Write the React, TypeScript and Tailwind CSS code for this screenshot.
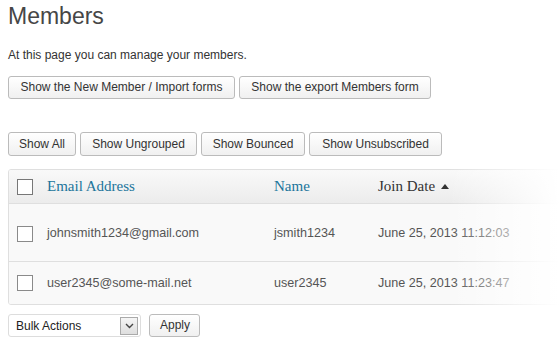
import React from "react";

const btn =
  "h-[23px] px-[10px] rounded-[3px] border border-[#bbb] bg-gradient-to-b from-white to-[#f0f0f0] text-[12px] leading-[21px] text-[#333] whitespace-nowrap";

function Check({ dark }: { dark?: boolean }) {
  return (
    <span
      className={`block w-[16px] h-[16px] bg-white border ${dark ? "border-[#777]" : "border-[#8a8a8a]"}`}
    />
  );
}

export default function App() {
  const rows = [
    { email: "johnsmith1234@gmail.com", name: "jsmith1234", date: "June 25, 2013 11:12:03", h: "h-[58px]" },
    { email: "user2345@some-mail.net", name: "user2345", date: "June 25, 2013 11:23:47", h: "h-[42px]" },
  ];
  return (
    <div className="w-[559px] h-[347px] overflow-hidden bg-white relative font-['Liberation_Sans',Arial,sans-serif] text-[#333]">
      <div className="pl-[8px]">
        <h2 className="text-[23px] leading-[29px] text-[#464646] pt-[2px]">Members</h2>
        <p className="text-[12px] leading-[16px] mt-[16px]">At this page you can manage your members.</p>
        <div className="flex gap-[4px] mt-[13px]">
          <button className={`${btn} w-[227px]`}>Show the New Member / Import forms</button>
          <button className={`${btn} w-[192px]`}>Show the export Members form</button>
        </div>
        <div className="flex gap-[4px] mt-[33px]">
          <button className={`${btn} h-[24px] w-[68px]`}>Show All</button>
          <button className={`${btn} h-[24px] w-[117px]`}>Show Ungrouped</button>
          <button className={`${btn} h-[24px] w-[104px]`}>Show Bounced</button>
          <button className={`${btn} h-[24px] w-[133px]`}>Show Unsubscribed</button>
        </div>
        <div className="mt-[13px] w-[640px] border border-[#dfdfdf] rounded-[3px] overflow-hidden">
          <div className="flex items-center h-[34px] bg-gradient-to-b from-[#f9f9f9] to-[#ececec] border-b border-[#dfdfdf]">
            <div className="w-[38px] pl-[8px]"><Check dark /></div>
            <div className="w-[227px] font-['Liberation_Serif',Georgia,serif] text-[15px] text-[#21759b]">Email Address</div>
            <div className="w-[104px] font-['Liberation_Serif',Georgia,serif] text-[15px] text-[#21759b]">Name</div>
            <div className="flex items-center gap-[6px] font-['Liberation_Serif',Georgia,serif] text-[15px] text-[#333]">
              Join Date
              <svg width="8" height="5" viewBox="0 0 8 5"><path d="M0 5 L4 0 L8 5 Z" fill="#333" /></svg>
            </div>
          </div>
          {rows.map((r, i) => (
            <div
              key={i}
              className={`flex items-center ${r.h} bg-[#f9f9f9] text-[12.6px] text-[#555] ${i === 0 ? "border-b border-[#dfdfdf] pt-[2px]" : ""}`}
            >
              <div className="w-[38px] pl-[8px]"><Check /></div>
              <div className="w-[227px]">{r.email}</div>
              <div className="w-[104px]">{r.name}</div>
              <div>{r.date}</div>
            </div>
          ))}
        </div>
        <div className="flex items-center gap-[8px] mt-[9px]">
          <div className="w-[133px] h-[23px] border border-[#ddd] rounded-[3px] bg-white flex items-center justify-between pl-[7px] pr-[2px] text-[12px] text-[#222]">
            <span>Bulk Actions</span>
            <span className="w-[18px] h-[18px] border border-[#aaa] bg-gradient-to-b from-[#f5f5f5] to-[#dedede] flex items-center justify-center">
              <svg width="9" height="6" viewBox="0 0 9 6"><path d="M1 1 L4.5 4.5 L8 1" stroke="#444" strokeWidth="1.4" fill="none" /></svg>
            </span>
          </div>
          <button className={`${btn} w-[51px] px-0`}>Apply</button>
        </div>
      </div>
      <div className="absolute top-[165px] right-0 w-[110px] h-[145px] bg-gradient-to-r from-white/0 to-white" />
    </div>
  );
}
